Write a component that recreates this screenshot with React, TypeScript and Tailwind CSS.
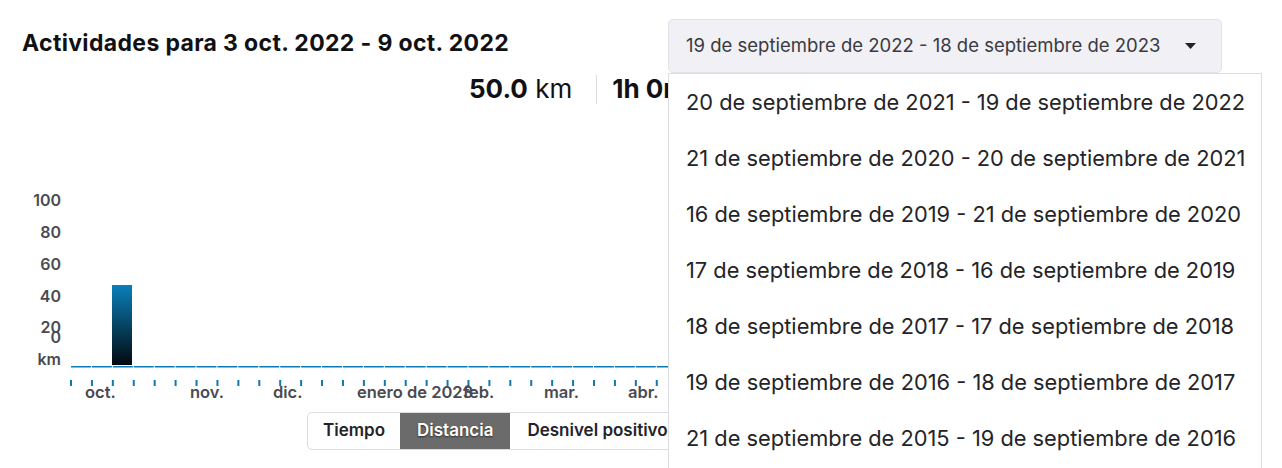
import React from 'react';

const blue = '#0a7bb5';

const ranges = [
  '20 de septiembre de 2021 - 19 de septiembre de 2022',
  '21 de septiembre de 2020 - 20 de septiembre de 2021',
  '16 de septiembre de 2019 - 21 de septiembre de 2020',
  '17 de septiembre de 2018 - 16 de septiembre de 2019',
  '18 de septiembre de 2017 - 17 de septiembre de 2018',
  '19 de septiembre de 2016 - 18 de septiembre de 2017',
  '21 de septiembre de 2015 - 19 de septiembre de 2016',
  '22 de septiembre de 2014 - 20 de septiembre de 2015',
];

const yLabels = [
  { t: '100', y: 206 },
  { t: '80', y: 238 },
  { t: '60', y: 270 },
  { t: '40', y: 302 },
  { t: '20', y: 333 },
  { t: '0', y: 343 },
  { t: 'km', y: 365 },
];

const months = [
  { t: 'oct.', x: 85 },
  { t: 'nov.', x: 190 },
  { t: 'dic.', x: 273 },
  { t: 'enero de 2023', x: 357 },
  { t: 'feb.', x: 463 },
  { t: 'mar.', x: 544 },
  { t: 'abr.', x: 628 },
];

const step = 20.92;
const ticks = Array.from({ length: 53 }, (_, i) => 70 + i * step);

const Chart = () => (
  <svg width={1240} height={302} viewBox="0 105 1240 302" className="block">
    <defs>
      <linearGradient id="barGrad" x1="0" y1="0" x2="0" y2="1">
        <stop offset="0%" stopColor="#0a80ba" />
        <stop offset="100%" stopColor="#02090e" />
      </linearGradient>
    </defs>
    {yLabels.map((l) => (
      <text
        key={l.t}
        x={61}
        y={l.y}
        textAnchor="end"
        fontSize={16}
        fontWeight={600}
        fill="#4a4a52"
        fontFamily="Inter, sans-serif"
      >
        {l.t}
      </text>
    ))}
    {/* baseline segments between weekly ticks */}
    {ticks.slice(0, -1).map((x, i) => (
      <rect key={i} x={x + 1} y={366} width={step - 1} height={1.5} fill={blue} />
    ))}
    {ticks.map((x, i) => (
      <rect key={i} x={x} y={380} width={2} height={6} fill={blue} />
    ))}
    <rect x={112} y={285} width={20} height={80} fill="url(#barGrad)" />
    {months.map((m) => (
      <text
        key={m.t}
        x={m.x}
        y={398}
        fontSize={16.5}
        fontWeight={600}
        fill="#4a4a52"
        fontFamily="Inter, sans-serif"
      >
        {m.t}
      </text>
    ))}
  </svg>
);

export default function App() {
  return (
    <div className="relative w-[1282px] h-[468px] overflow-hidden bg-white font-['Inter',sans-serif] text-[#242428]">
      {/* header */}
      <div className="flex h-[73px]">
        <h1 className="w-[668px] pl-[22px] pt-[29px] text-[23px] leading-[28px] font-bold tracking-[0.35px] text-[#111114]">
          Actividades para 3 oct. 2022 - 9 oct. 2022
        </h1>
        <div className="relative mt-[19px]">
          <button className="flex items-center justify-between w-[554px] h-[54px] pl-[17px] pr-[25px] bg-[#f0f0f5] border border-[#e2e2e8] rounded-[5px] text-[18.5px] text-[#3a3a40]">
            <span>19 de septiembre de 2022 - 18 de septiembre de 2023</span>
            <svg width="11" height="6" viewBox="0 0 11 6">
              <path d="M0 0 L11 0 L5.5 6 Z" fill="#242428" />
            </svg>
          </button>
          <ul className="absolute top-full left-0 z-10 w-[594px] bg-white border border-[#dcdce2]">
            {ranges.map((r) => (
              <li key={r} className="h-[56px] flex items-center pl-[17px] text-[21.8px] text-[#242428]">
                {r}
              </li>
            ))}
          </ul>
        </div>
      </div>

      {/* stats */}
      <div className="flex items-center h-[32px] pl-[469px] text-[26px] leading-[32px] text-[#111114]">
        <div>
          <span className="font-bold">50.0</span> <span className="font-normal">km</span>
        </div>
        <div className="w-px h-[29px] bg-[#dcdce2] ml-[24px] mr-[15px]" />
        <div>
          <span className="font-bold">1h 0m</span>
        </div>
      </div>

      {/* chart */}
      <Chart />

      {/* tabs */}
      <div className="mt-[5px] ml-[307px] flex w-max h-[38px] border border-[#dcdce2] rounded-[5px] overflow-hidden text-[17px] font-semibold">
        <button className="px-[15px] text-[#242428]">Tiempo</button>
        <button className="px-[17px] bg-[#6b6b6b] text-white [text-shadow:0_1px_2px_rgba(0,0,0,0.6)]">
          Distancia
        </button>
        <button className="px-[17px] text-[#242428]">Desnivel positivo</button>
      </div>
    </div>
  );
}
